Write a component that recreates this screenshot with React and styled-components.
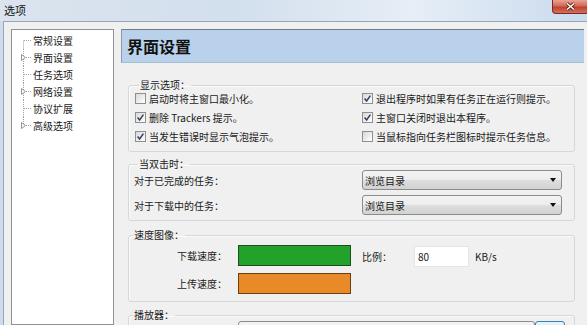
import React from "react";
import styled, { createGlobalStyle } from "styled-components";

const Global = createGlobalStyle`
  html, body { margin: 0; padding: 0; background: #cfdcec; }
  body { font-family: "Noto Sans CJK SC", "Noto Sans", sans-serif; }
  #root { width: 587px; height: 325px; overflow: hidden; }
`;

const Window = styled.div`
  width: 587px;
  height: 325px;
  display: flex;
  flex-direction: column;
  overflow: hidden;
  background: linear-gradient(90deg, #cddbea 0%, #d3e0ee 50%, #e3ebf4 72%, #c8d9ec 100%);
`;

const TitleBar = styled.div`
  height: 21px;
  flex: none;
  display: flex;
  justify-content: space-between;
  align-items: flex-start;
  padding-left: 4px;
  background: linear-gradient(90deg, #dbe4ee 0%, #d2dfed 40%, #e6eef6 70%, #cadbee 100%);
`;

const Title = styled.span`
  font-size: 11px;
  line-height: 20px;
  color: #111;
`;

const CloseButton = styled.div`
  width: 37px;
  height: 14px;
  margin-right: -2px;
  border: 1px solid #7c2a20;
  border-top: none;
  border-radius: 0 0 4px 4px;
  background: linear-gradient(#e9a394 0%, #d26a59 45%, #c2412f 55%, #d4705e 100%);
  display: flex;
  align-items: center;
  justify-content: center;
  box-sizing: border-box;
`;

const Client = styled.div`
  flex: 1;
  min-height: 0;
  margin-left: 3px;
  border-left: 1px solid #97a5b8;
  border-top: 1px solid #97a5b8;
  background: #f0f0f0;
  display: flex;
  gap: 7px;
  padding: 7px 3px 0 7px;
`;

const Tree = styled.div`
  width: 103px;
  flex: none;
  box-sizing: border-box;
  background: #fff;
  border: 1px solid #8e9297;
  padding-top: 2px;
`;

const TreeRow = styled.div`
  height: 17px;
  display: flex;
  align-items: center;
  font-size: 10px;
  color: #1a1a1a;
`;

const Main = styled.div`
  width: 463px;
  flex: none;
  display: flex;
  flex-direction: column;
`;

const Header = styled.div`
  height: 34px;
  flex: none;
  box-sizing: border-box;
  background: #b9d1ea;
  border-top: 1px solid #6f7b88;
  border-left: 1px solid #8d99a6;
  border-bottom: 1px solid #a9bdd3;
  display: flex;
  align-items: center;
  padding-left: 5px;
  font-size: 16px;
  font-weight: 700;
  color: #111;
`;

const Content = styled.div`
  display: flex;
  flex-direction: column;
  padding: 16px 9px 0 7px;
`;

const Group = styled.fieldset`
  margin: ${p => p.$top || 0}px 0 0 0;
  padding: ${p => p.$pad || "0 0 0 0"};
  border: 1px solid #d3d8dd;
  border-radius: 3px;
  box-shadow: inset 1px 1px 0 #fafafa;
  min-width: 0;
`;

const Legend = styled.legend`
  font-size: 10px;
  line-height: 12px;
  padding: 0 1px;
  margin-left: 4px;
  margin-bottom: -2px;
  color: #1a1a1a;
`;

const CheckGrid = styled.div`
  display: grid;
  grid-template-columns: 227px 1fr;
  grid-auto-rows: 19px;
  align-items: center;
`;

const CheckItem = styled.label`
  display: flex;
  align-items: center;
  gap: 3px;
  font-size: 10px;
  color: #1a1a1a;
  white-space: nowrap;
`;

const Box = styled.span`
  width: 11px;
  height: 11px;
  box-sizing: border-box;
  border: 1px solid #8f8f8f;
  background: linear-gradient(135deg, #d8d8d8 0%, #f4f4f4 70%, #ffffff 100%);
  display: flex;
  align-items: center;
  justify-content: center;
  flex: none;
`;

const FormGrid = styled.div`
  display: grid;
  grid-template-columns: 228px 200px;
  row-gap: 5px;
  align-items: center;
`;

const Text = styled.span`
  font-size: 10px;
  color: #1a1a1a;
  white-space: nowrap;
`;

const Select = styled.div`
  height: 20px;
  box-sizing: border-box;
  border: 1px solid #8b8b8b;
  border-radius: 3px;
  background: linear-gradient(#f4f4f4 0%, #ececec 50%, #dedede 52%, #d2d2d2 100%);
  display: flex;
  align-items: center;
  justify-content: space-between;
  padding: 0 5px 0 2px;
  font-size: 10px;
  color: #1a1a1a;
`;

const Arrow = styled.span`
  width: 0;
  height: 0;
  border-left: 3.5px solid transparent;
  border-right: 3.5px solid transparent;
  border-top: 4px solid #111;
`;

const SpeedGrid = styled.div`
  display: grid;
  grid-template-columns: 93px 113px auto;
  column-gap: 16px;
  row-gap: 6px;
  align-items: center;
`;

const RightLabel = styled(Text)`
  text-align: right;
  margin-right: -5px;
`;

const Bar = styled.div`
  height: 21px;
  box-sizing: border-box;
  background: ${p => p.$color};
  border: 1px solid ${p => p.$edge};
`;

const Ratio = styled.div`
  display: flex;
  align-items: center;
  margin-left: -5px;
  margin-top: 3px;
`;

const RatioLabel = styled(Text)`
  width: 52px;
`;

const Input = styled.div`
  width: 55px;
  height: 21px;
  box-sizing: border-box;
  background: #fff;
  border: 1px solid #e4e4e4;
  font-size: 10px;
  display: flex;
  align-items: center;
  padding-left: 3px;
  color: #1a1a1a;
`;

const Unit = styled(Text)`
  margin-left: 6px;
`;

const PlayerRow = styled.div`
  display: flex;
  padding-left: 109px;
`;

const PlayerSelect = styled(Select)`
  width: 297px;
`;

const SmallButton = styled.div`
  width: 30px;
  height: 20px;
  box-sizing: border-box;
  border: 1px solid #3c7fb1;
  border-radius: 3px;
  background: linear-gradient(#e5f4fc, #c4e5f6);
`;

const Check = ({ checked, children }) => (
  <CheckItem>
    <Box>
      {checked && (
        <svg width="9" height="9" viewBox="0 0 9 9">
          <path d="M1.6 4.6 L3.6 7 L7.4 1.6" stroke="#33405c" strokeWidth="1.5" fill="none" />
        </svg>
      )}
    </Box>
    {children}
  </CheckItem>
);

const Connector = ({ pos, expander }) => {
  const y1 = pos === "first" ? 8.5 : 0;
  const y2 = pos === "last" ? 8.5 : 17;
  return (
    <svg width="21" height="17" viewBox="0 0 21 17" style={{ flex: "none" }}>
      <line x1="11.5" y1={y1} x2="11.5" y2={y2} stroke="#a0a0a0" strokeDasharray="1 1" />
      <line x1="12" y1="8.5" x2="20" y2="8.5" stroke="#a0a0a0" strokeDasharray="1 1" />
      {expander && (
        <path d="M9.5 5.5 L13.5 8.5 L9.5 11.5 Z" fill="#fff" stroke="#8a8a8a" strokeWidth="0.9" />
      )}
    </svg>
  );
};

const treeItems = [
  { label: "常规设置", pos: "first" },
  { label: "界面设置", expander: true },
  { label: "任务选项" },
  { label: "网络设置", expander: true },
  { label: "协议扩展" },
  { label: "高级选项", expander: true, pos: "last" },
];

export default function App() {
  return (
    <>
      <Global />
      <Window>
        <TitleBar>
          <Title>选项</Title>
          <CloseButton>
            <svg width="11" height="9" viewBox="0 0 11 9">
              <path d="M2 1.5 L9 7.5 M9 1.5 L2 7.5" stroke="#5a1a12" strokeWidth="3" />
              <path d="M2 1.5 L9 7.5 M9 1.5 L2 7.5" stroke="#fff" strokeWidth="1.6" />
            </svg>
          </CloseButton>
        </TitleBar>
        <Client>
          <Tree>
            {treeItems.map((it) => (
              <TreeRow key={it.label}>
                <Connector pos={it.pos} expander={it.expander} />
                {it.label}
              </TreeRow>
            ))}
          </Tree>
          <Main>
            <Header>界面设置</Header>
            <Content>
              <Group $pad="0 0 5px 6px">
                <Legend>显示选项：</Legend>
                <CheckGrid>
                  <Check>启动时将主窗口最小化。</Check>
                  <Check checked>退出程序时如果有任务正在运行则提示。</Check>
                  <Check checked>删除 Trackers 提示。</Check>
                  <Check checked>主窗口关闭时退出本程序。</Check>
                  <Check checked>当发生错误时显示气泡提示。</Check>
                  <Check>当鼠标指向任务栏图标时提示任务信息。</Check>
                </CheckGrid>
              </Group>
              <Group $top={6} $pad="2px 0 5px 5px">
                <Legend>当双击时：</Legend>
                <FormGrid>
                  <Text>对于已完成的任务：</Text>
                  <Select>浏览目录<Arrow /></Select>
                  <Text>对于下载中的任务：</Text>
                  <Select>浏览目录<Arrow /></Select>
                </FormGrid>
              </Group>
              <Group $top={8} $pad="4px 0 7px 0">
                <Legend>速度图像：</Legend>
                <SpeedGrid>
                  <RightLabel>下载速度：</RightLabel>
                  <Bar $color="#22a12b" $edge="#1f4d22" />
                  <Ratio>
                    <RatioLabel>比例：</RatioLabel>
                    <Input>80</Input>
                    <Unit>KB/s</Unit>
                  </Ratio>
                  <RightLabel>上传速度：</RightLabel>
                  <Bar $color="#e88a27" $edge="#6b4113" />
                </SpeedGrid>
              </Group>
              <Group $top={7} $pad="2px 0 5px 0">
                <Legend>播放器：</Legend>
                <PlayerRow>
                  <PlayerSelect>
                    <span />
                  </PlayerSelect>
                  <SmallButton />
                </PlayerRow>
              </Group>
            </Content>
          </Main>
        </Client>
      </Window>
    </>
  );
}
